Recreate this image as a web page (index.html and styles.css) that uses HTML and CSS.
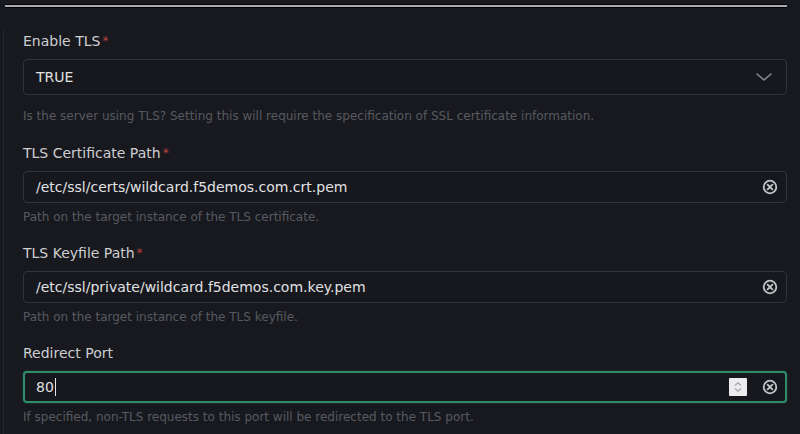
FILE: index.html
```html
<!DOCTYPE html>
<html lang="en">
<head>
<meta charset="utf-8">
<title>TLS settings</title>
<link rel="stylesheet" href="styles.css">
</head>
<body>
<div class="topbar"></div>
<div class="panel">
  <div class="field field-select">
    <div class="label">Enable TLS<span class="req">*</span></div>
    <div class="control select">
      <span class="value">TRUE</span>
      <svg class="chevron" width="16" height="8" viewBox="0 0 16 8"><path d="M1 1 L8 7 L15 1" fill="none" stroke="#8a8b93" stroke-width="1.6" stroke-linecap="round" stroke-linejoin="round"/></svg>
    </div>
    <p class="help help-select">Is the server using TLS? Setting this will require the specification of SSL certificate information.</p>
  </div>

  <div class="field">
    <div class="label">TLS Certificate Path<span class="req">*</span></div>
    <div class="control">
      <span class="value">/etc/ssl/certs/wildcard.f5demos.com.crt.pem</span>
      <svg class="clear" width="16" height="16" viewBox="0 0 16 16"><circle cx="8" cy="8" r="6.3" fill="none" stroke="#c2c3c7" stroke-width="1.8"/><path d="M5.6 5.6 L10.4 10.4 M10.4 5.6 L5.6 10.4" stroke="#c2c3c7" stroke-width="1.8" stroke-linecap="round"/></svg>
    </div>
    <p class="help">Path on the target instance of the TLS certificate.</p>
  </div>

  <div class="field">
    <div class="label">TLS Keyfile Path<span class="req">*</span></div>
    <div class="control">
      <span class="value">/etc/ssl/private/wildcard.f5demos.com.key.pem</span>
      <svg class="clear" width="16" height="16" viewBox="0 0 16 16"><circle cx="8" cy="8" r="6.3" fill="none" stroke="#c2c3c7" stroke-width="1.8"/><path d="M5.6 5.6 L10.4 10.4 M10.4 5.6 L5.6 10.4" stroke="#c2c3c7" stroke-width="1.8" stroke-linecap="round"/></svg>
    </div>
    <p class="help">Path on the target instance of the TLS keyfile.</p>
  </div>

  <div class="field">
    <div class="label">Redirect Port</div>
    <div class="control focused">
      <span class="value">80</span><span class="caret"></span>
      <span class="spinner">
        <svg width="18" height="18" viewBox="0 0 18 18"><path d="M6 7.5 L9 4.8 L12 7.5" fill="none" stroke="#a2a3a8" stroke-width="1.1"/><path d="M6 10.5 L9 13.2 L12 10.5" fill="none" stroke="#a2a3a8" stroke-width="1.1"/></svg>
      </span>
      <svg class="clear" width="16" height="16" viewBox="0 0 16 16"><circle cx="8" cy="8" r="6.3" fill="none" stroke="#c2c3c7" stroke-width="1.8"/><path d="M5.6 5.6 L10.4 10.4 M10.4 5.6 L5.6 10.4" stroke="#c2c3c7" stroke-width="1.8" stroke-linecap="round"/></svg>
    </div>
    <p class="help">If specified, non-TLS requests to this port will be redirected to the TLS port.</p>
  </div>
</div>
</body>
</html>
```

FILE: styles.css
```css
html, body {
  margin: 0;
  padding: 0;
  background: #18191e;
  height: 100%;
  overflow: hidden;
}
body {
  font-family: "DejaVu Sans", sans-serif;
  color: #cbccd0;
}
.topbar {
  margin: 4px 13px 0 5px;
  height: 2px;
  background: #a9aaae;
  border-top: 1px solid #050507;
  border-bottom: 1px solid #050507;
}
.panel {
  margin: 22px 0 0 3px;
  border-left: 1px solid #26272d;
  padding: 1px 13px 10px 19px;
}
.field {
  margin-bottom: 18px;
}
.field-select {
  margin-bottom: 19px;
}
.label {
  font-size: 14px;
  line-height: 20px;
  color: #cdced2;
  margin-bottom: 8px;
}
.req {
  color: #b8403f;
  font-size: 12px;
  margin-left: 2px;
  vertical-align: 1px;
}
.control {
  box-sizing: border-box;
  height: 32px;
  border: 1px solid #33343b;
  border-radius: 4px;
  display: flex;
  align-items: center;
  padding: 0 8px 0 12px;
  background: #17181d;
}
.select {
  height: 36px;
  padding-right: 14px;
}
.value {
  font-size: 14px;
  color: #e0e1e4;
  white-space: nowrap;
}
.select .value {
  flex: 1;
}
.control:not(.select) .value {
  flex: 0 0 auto;
}
.chevron {
  display: block;
}
.clear {
  display: block;
  margin-left: auto;
}
.focused {
  border: 2px solid #2f8d6c;
  box-shadow: 0 0 2px rgba(47, 141, 108, 0.5);
  padding-left: 11px;
  padding-right: 7px;
}
.caret {
  width: 1px;
  height: 18px;
  background: #e6e6e8;
  margin-left: 1px;
}
.spinner {
  margin-left: auto;
  width: 18px;
  height: 18px;
  background: #ececee;
  border-radius: 1px;
  margin-right: 15px;
  display: block;
}
.spinner svg {
  display: block;
}
.focused .clear {
  margin-left: 0;
}
.help {
  margin: 6px 0 0;
  font-size: 12px;
  line-height: 16px;
  color: #575960;
}
.help-select {
  margin-top: 13px;
}
```
